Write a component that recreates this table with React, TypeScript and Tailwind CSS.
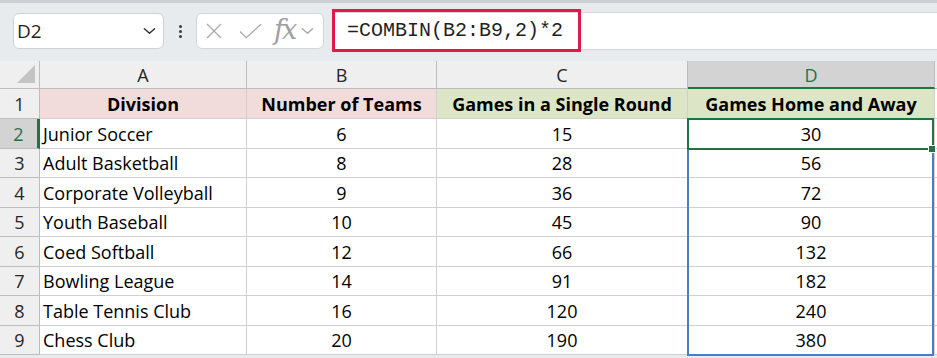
import React from "react";

const data: [string, number, number, number][] = [
  ["Junior Soccer", 6, 15, 30],
  ["Adult Basketball", 8, 28, 56],
  ["Corporate Volleyball", 9, 36, 72],
  ["Youth Baseball", 10, 45, 90],
  ["Coed Softball", 12, 66, 132],
  ["Bowling League", 14, 91, 182],
  ["Table Tennis Club", 16, 120, 240],
  ["Chess Club", 20, 190, 380],
];

function Chevron({ className }: { className?: string }) {
  return (
    <svg viewBox="0 0 14 8" className={className} fill="none" stroke="currentColor" strokeWidth="1.6" strokeLinecap="round" strokeLinejoin="round">
      <path d="M1.5 1.5 7 6.5l5.5-5" />
    </svg>
  );
}

function FormulaBar() {
  return (
    <div className="h-[61px] border-t-[3px] border-[#cdd1d4] bg-[#e8ebee] pt-[10px] flex items-start">
      {/* name box */}
      <div className="ml-[13px] w-[151px] h-[36px] bg-white border border-[#cfd2d5] rounded-[6px] flex items-center pl-[3px] pr-[7px]">
        <span className="flex-1 text-[19px] text-[#1f1f1f] font-['Open_Sans',sans-serif] leading-none">D2</span>
        <Chevron className="w-[13px] h-[8px] text-[#333]" />
      </div>
      {/* dots */}
      <div className="w-[32px] h-[36px] flex flex-col items-center justify-center gap-[2px]">
        <span className="w-[3px] h-[3px] rounded-full bg-[#3a3a3a]" />
        <span className="w-[3px] h-[3px] rounded-full bg-[#3a3a3a]" />
        <span className="w-[3px] h-[3px] rounded-full bg-[#3a3a3a]" />
      </div>
      {/* fx box */}
      <div className="w-[128px] h-[36px] bg-white border border-[#d3d6d9] rounded-[6px] flex items-center pl-[9px] text-[#a8a8a8]">
        <svg viewBox="0 0 16 16" className="w-[16px] h-[16px]" fill="none" stroke="currentColor" strokeWidth="1.3">
          <path d="M1 1l14 14M15 1 1 15" />
        </svg>
        <svg viewBox="0 0 24 16" className="ml-[17px] w-[23px] h-[16px]" fill="none" stroke="currentColor" strokeWidth="1.3">
          <path d="M1 8.5 7.5 15 23 1" />
        </svg>
        <span className="ml-[12px] text-[27px] italic leading-none font-['DejaVu_Serif',serif] tracking-[-2px] text-[#a0a0a0] -mt-[4px]">fx</span>
        <Chevron className="ml-[6px] w-[13px] h-[8px] text-[#a8a8a8]" />
      </div>
      {/* formula input */}
      <div className="relative ml-[9px] mt-[-1px] flex-1 h-[38px] bg-white border-y border-[#d3d6d9] flex items-center pl-[14px]">
        <span className="text-[20px] leading-none text-[#1f1f1f] font-['Liberation_Mono',monospace]">=COMBIN(B2:B9,2)*2</span>
        <div className="absolute left-[-1px] top-[-4px] w-[249px] h-[43px] border-[3px] border-[#e0194b]" />
      </div>
    </div>
  );
}

const cols = ["A", "B", "C", "D"];

export default function App() {
  const cell = "border-r border-b border-[#d0d0d0] flex items-center pt-[2px] text-[18px] text-black";
  const hdr = "border-r border-b border-[#bdbdbd] bg-[#efefef] flex items-center justify-center pt-[2px] text-[18px] text-[#262626]";
  return (
    <div className="w-[937px] h-[358px] overflow-hidden bg-[#e8ebee] font-['Open_Sans',sans-serif]">
      <FormulaBar />
      <div className="relative grid grid-cols-[40px_207px_190px_251px_247px_1fr] grid-rows-[28px_30px_repeat(8,29.5px)] bg-white">
        {/* column headers */}
        <div className="border-r border-b border-[#bdbdbd] bg-[#efefef] relative">
          <div className="absolute right-[4px] bottom-[5px] w-0 h-0 border-l-[18px] border-l-transparent border-b-[18px] border-b-[#c4c4c4]" />
        </div>
        {cols.map((c) =>
          c === "D" ? (
            <div key={c} className="border-r border-[#bdbdbd] border-b-2 border-b-[#217346] bg-[#d3d3d3] flex items-center justify-center pt-[2px] text-[18px] text-[#217346]">
              {c}
            </div>
          ) : (
            <div key={c} className={hdr}>{c}</div>
          )
        )}
        <div className="border-b border-[#bdbdbd] bg-[#efefef]" />

        {/* row 1 */}
        <div className={hdr}>1</div>
        <div className={`${cell} justify-center font-bold bg-[#f2dcdb]`}>Division</div>
        <div className={`${cell} justify-center font-bold bg-[#f2dcdb]`}>Number of Teams</div>
        <div className={`${cell} justify-center font-bold bg-[#dce6c6]`}>Games in a Single Round</div>
        <div className={`${cell} justify-center font-bold bg-[#dce6c6]`}>Games Home and Away</div>
        <div className="border-b border-[#d0d0d0]" />

        {data.map((r, i) => (
          <React.Fragment key={r[0]}>
            {i === 0 ? (
              <div className="border-r-[3px] border-r-[#217346] border-b border-b-[#bdbdbd] bg-[#d3d3d3] flex items-center justify-center pt-[2px] text-[18px] text-[#217346]">
                2
              </div>
            ) : (
              <div className={hdr}>{i + 2}</div>
            )}
            <div className={`${cell} pl-[3px]`}>{r[0]}</div>
            <div className={`${cell} justify-center`}>{r[1]}</div>
            <div className={`${cell} justify-center`}>{r[2]}</div>
            <div className={`${cell} justify-center`}>{r[3]}</div>
            <div className="border-b border-[#d0d0d0]" />
          </React.Fragment>
        ))}

        {/* selection overlays */}
        <div className="absolute left-[687px] top-[89px] w-[247px] h-[206px] border-2 border-t-0 border-[#4a7cc7] pointer-events-none" />
        <div className="absolute left-[687px] top-[57px] w-[247px] h-[32px] border-2 border-[#217346] pointer-events-none" />
        <div className="absolute left-[928px] top-[84px] w-[8px] h-[8px] bg-[#217346] border border-white pointer-events-none" />
      </div>
    </div>
  );
}
